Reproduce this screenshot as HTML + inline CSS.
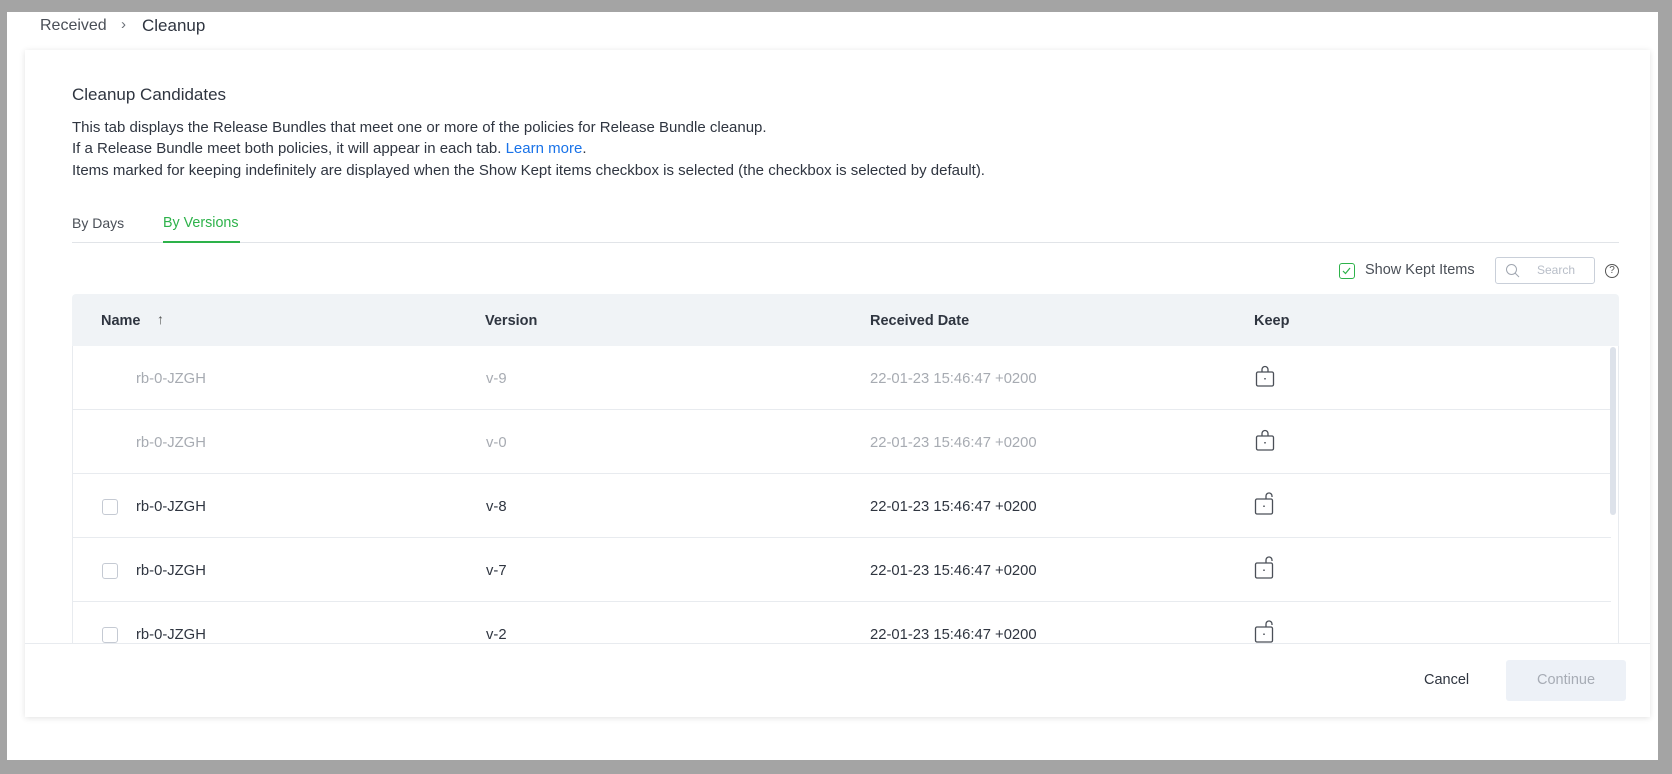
<!DOCTYPE html>
<html><head><meta charset="utf-8"><style>
*{box-sizing:border-box;margin:0;padding:0}
body{width:1672px;height:774px;background:#a4a4a4;position:relative;overflow:hidden;font-family:"Liberation Sans",sans-serif;color:#2f3540}
.main{position:absolute;left:7px;top:12px;width:1651px;height:748px;background:#fff}
.abs{position:absolute;white-space:nowrap}
.card{position:absolute;left:25px;top:50px;width:1625px;height:667px;background:#fff;box-shadow:0 1px 6px rgba(0,0,0,.12)}
.th{position:absolute;top:294px;left:72px;width:1547px;height:52px;background:#f0f3f6;border-radius:4px 4px 0 0}
.row{position:absolute;left:0;width:1538px;height:64px;border-bottom:1px solid #e8ebef;font-size:14.8px}
.row span{position:absolute;top:25px}
.cb{position:absolute;left:29px;top:25px;width:16px;height:16px;border:1px solid #c5cad3;border-radius:3px}
.dim{color:#a7abb2}
</style></head><body>
<div class="main"></div>
<div class="abs" style="left:40px;top:17px;font-size:16px;color:#4a4f57">Received</div>
<div class="abs" style="left:121px;top:16px;font-size:15px;color:#6a6f77">›</div>
<div class="abs" style="left:142px;top:16px;font-size:17px;color:#2f3540">Cleanup</div>
<div class="card"></div>
<div class="abs" style="left:72px;top:85px;font-size:17px">Cleanup Candidates</div>
<div class="abs" style="left:72px;top:117px;font-size:15px;line-height:21.4px">This tab displays the Release Bundles that meet one or more of the policies for Release Bundle cleanup.<br>If a Release Bundle meet both policies, it will appear in each tab. <span style="color:#1a73e8">Learn more</span>.<br>Items marked for keeping indefinitely are displayed when the Show Kept items checkbox is selected (the checkbox is selected by default).</div>
<div class="abs" style="left:72px;top:215px;font-size:14px;color:#4a4f57">By Days</div>
<div class="abs" style="left:163px;top:215px;font-size:14.3px;color:#2db24a">By Versions</div>
<div class="abs" style="left:72px;top:242px;width:1547px;height:1px;background:#e1e4e8"></div>
<div class="abs" style="left:163px;top:241px;width:77px;height:2px;background:#2db24a"></div>
<div class="abs" style="left:1339px;top:263px;width:16px;height:16px;border:1.5px solid #2db24a;border-radius:3px"><svg width="13" height="13" style="position:absolute;left:0;top:0"><path d="M3 7l2.5 2.5L10 4" fill="none" stroke="#2db24a" stroke-width="1.2"/></svg></div>
<div class="abs" style="left:1365px;top:262px;font-size:14.5px;color:#4a4f57">Show Kept Items</div>
<div class="abs" style="left:1495px;top:257px;width:100px;height:27px;border:1px solid #c9cfd9;border-radius:3px"><svg width="16" height="16" style="position:absolute;left:9px;top:5px"><circle cx="6.5" cy="6.5" r="5" fill="none" stroke="#a0a6b0" stroke-width="1"/><path d="M10 10l4 4" stroke="#a0a6b0"/></svg><span style="position:absolute;left:41px;top:5px;font-size:12px;color:#b8bec8">Search</span></div>
<div class="abs" style="left:1605px;top:264px;width:14px;height:14px;border:1px solid #555;border-radius:50%;font-size:10px;text-align:center;line-height:12px;color:#555">?</div>
<div class="th"></div>
<div class="abs" style="left:101px;top:313px;font-size:14.5px;font-weight:bold">Name</div>
<div class="abs" style="left:157px;top:311px;font-size:14px;color:#555">↑</div>
<div class="abs" style="left:485px;top:313px;font-size:14.5px;font-weight:bold">Version</div>
<div class="abs" style="left:870px;top:313px;font-size:14.5px;font-weight:bold">Received Date</div>
<div class="abs" style="left:1254px;top:313px;font-size:14.5px;font-weight:bold">Keep</div>
<div class="abs" style="left:72px;top:346px;width:1547px;height:297px;border-left:1px solid #e8ebef;border-right:1px solid #e8ebef;overflow:hidden">
 <div class="row dim" style="top:0"><span style="left:63px">rb-0-JZGH</span><span style="left:413px">v-9</span><span style="left:797px">22-01-23 15:46:47 +0200</span>
 <svg width="24" height="26" style="position:absolute;left:1182px;top:18px"><path d="M7 8V5.5a3 3 0 0 1 6 0V8" fill="none" stroke="#4a4f57" stroke-width="1.3"/><rect x="1.5" y="8" width="17" height="14" rx="1.5" fill="none" stroke="#4a4f57" stroke-width="1.3"/><path d="M10 14v1.5" stroke="#4a4f57" stroke-width="1.5"/></svg></div>
 <div class="row dim" style="top:64px"><span style="left:63px">rb-0-JZGH</span><span style="left:413px">v-0</span><span style="left:797px">22-01-23 15:46:47 +0200</span>
 <svg width="24" height="26" style="position:absolute;left:1182px;top:18px"><path d="M7 8V5.5a3 3 0 0 1 6 0V8" fill="none" stroke="#4a4f57" stroke-width="1.3"/><rect x="1.5" y="8" width="17" height="14" rx="1.5" fill="none" stroke="#4a4f57" stroke-width="1.3"/><path d="M10 14v1.5" stroke="#4a4f57" stroke-width="1.5"/></svg></div>
 <div class="row" style="top:128px"><div class="cb"></div><span style="left:63px">rb-0-JZGH</span><span style="left:413px">v-8</span><span style="left:797px">22-01-23 15:46:47 +0200</span>
 <svg width="26" height="26" style="position:absolute;left:1181px;top:17px"><path d="M12 8V5a3 3 0 0 1 6 0v1" fill="none" stroke="#4a4f57" stroke-width="1.3"/><rect x="1.5" y="8" width="17" height="15" rx="1.5" fill="none" stroke="#4a4f57" stroke-width="1.3"/><path d="M10 14.5v1.5" stroke="#4a4f57" stroke-width="1.5"/></svg></div>
 <div class="row" style="top:192px"><div class="cb"></div><span style="left:63px">rb-0-JZGH</span><span style="left:413px">v-7</span><span style="left:797px">22-01-23 15:46:47 +0200</span>
 <svg width="26" height="26" style="position:absolute;left:1181px;top:17px"><path d="M12 8V5a3 3 0 0 1 6 0v1" fill="none" stroke="#4a4f57" stroke-width="1.3"/><rect x="1.5" y="8" width="17" height="15" rx="1.5" fill="none" stroke="#4a4f57" stroke-width="1.3"/><path d="M10 14.5v1.5" stroke="#4a4f57" stroke-width="1.5"/></svg></div>
 <div class="row" style="top:256px"><div class="cb"></div><span style="left:63px">rb-0-JZGH</span><span style="left:413px">v-2</span><span style="left:797px">22-01-23 15:46:47 +0200</span>
 <svg width="26" height="26" style="position:absolute;left:1181px;top:17px"><path d="M12 8V5a3 3 0 0 1 6 0v1" fill="none" stroke="#4a4f57" stroke-width="1.3"/><rect x="1.5" y="8" width="17" height="15" rx="1.5" fill="none" stroke="#4a4f57" stroke-width="1.3"/><path d="M10 14.5v1.5" stroke="#4a4f57" stroke-width="1.5"/></svg></div>
 <div style="position:absolute;left:1537px;top:1px;width:6px;height:168px;background:#dde2ea;border-radius:3px"></div>
</div>
<div class="abs" style="left:25px;top:643px;width:1625px;height:1px;background:#e8ebef"></div>
<div class="abs" style="left:1424px;top:672px;font-size:14.5px;color:#2f3540">Cancel</div>
<div class="abs" style="left:1506px;top:660px;width:120px;height:41px;background:#edf1f7;border-radius:3px;font-size:14.5px;color:#a7acb5;text-align:center;line-height:41px">Continue</div>
</body></html>
